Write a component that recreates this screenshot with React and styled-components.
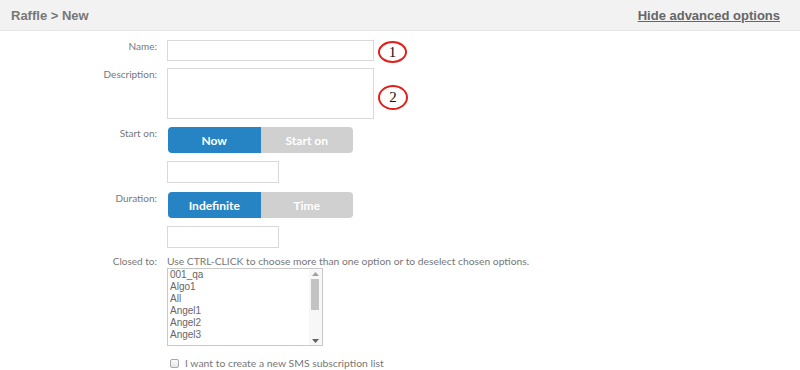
import React from "react";
import styled, { createGlobalStyle } from "styled-components";

const Global = createGlobalStyle`
  html, body { margin: 0; padding: 0; background: #fff; }
  body { font-family: Lato, "Open Sans", sans-serif; }
`;

const Page = styled.div`
  width: 800px;
  height: 370px;
  overflow: hidden;
  background: #fff;
`;

const Header = styled.div`
  height: 30px;
  background: #f2f2f2;
  border-bottom: 1px solid #e6e6e6;
  display: flex;
  align-items: center;
  justify-content: space-between;
  padding: 0 20px 0 11px;
  font-family: "Liberation Sans", Arial, sans-serif;
  font-weight: bold;
  font-size: 13px;
  color: #777;
`;

const HeaderLink = styled.a`
  color: #666;
  text-decoration: underline;
  cursor: pointer;
`;

const Form = styled.div`
  display: flex;
  flex-direction: column;
  padding-top: 9px;
`;

const Row = styled.div`
  display: flex;
  align-items: flex-start;
  gap: 10px;
  margin-bottom: ${(p) => p.$mb ?? 7}px;
`;

const Label = styled.div`
  width: 157px;
  flex: none;
  text-align: right;
  font-size: 10px;
  line-height: 13px;
  color: #777;
  padding-top: ${(p) => p.$pt ?? 0}px;
`;

const Field = styled.div`
  display: flex;
  flex-direction: column;
  align-items: flex-start;
  gap: ${(p) => p.$gap ?? 8}px;
`;

const Inline = styled.div`
  display: flex;
  align-items: flex-start;
`;

const TextInput = styled.div`
  box-sizing: border-box;
  width: ${(p) => p.$w}px;
  height: ${(p) => p.$h}px;
  border: 1px solid #d9d9d9;
  background: #fff;
`;

const Marker = styled.div`
  box-sizing: border-box;
  width: ${(p) => p.$w}px;
  height: ${(p) => p.$h}px;
  border: 2px solid #e0201a;
  border-radius: 50%;
  display: flex;
  align-items: center;
  justify-content: center;
  font-family: "Liberation Serif", "Times New Roman", serif;
  font-size: 15px;
  color: #111;
  margin-left: ${(p) => p.$ml}px;
  margin-top: ${(p) => p.$mt ?? 0}px;
  margin-bottom: ${(p) => p.$mb ?? 0}px;
`;

const Toggle = styled.div`
  display: flex;
  width: 185px;
  height: 26px;
  border-radius: 4px;
  overflow: hidden;
  margin-left: 1px;
`;

const ToggleBtn = styled.div`
  flex: 1;
  display: flex;
  align-items: center;
  justify-content: center;
  font-size: 12px;
  font-weight: 700;
  color: #fff;
  background: ${(p) => (p.$active ? "#2684c4" : "#d0d0d0")};
`;

const Hint = styled.div`
  font-size: 10.3px;
  line-height: 12px;
  color: #777;
`;

const ListBox = styled.div`
  box-sizing: border-box;
  width: 156px;
  height: 78px;
  border: 1px solid #c9c9c9;
  display: flex;
  margin-top: -7px;
  background: #fff;
`;

const Options = styled.div`
  flex: 1;
  padding: 0 0 0 2px;
  font-family: "Liberation Sans", Arial, sans-serif;
  font-size: 10px;
  line-height: 12px;
  color: #666;
  overflow: hidden;
`;

const Scrollbar = styled.div`
  width: 12px;
  display: flex;
  flex-direction: column;
  align-items: center;
  background: #f7f7f7;
  padding-right: 1px;
`;

const Arrow = styled.div`
  height: 9px;
  display: flex;
  align-items: center;
  justify-content: center;
`;

const Track = styled.div`
  flex: 1;
  width: 100%;
  display: flex;
  justify-content: center;
`;

const Thumb = styled.div`
  width: 8px;
  height: 31px;
  margin-top: 1px;
  background: #c3c3c3;
`;

const CheckRow = styled.label`
  display: flex;
  align-items: center;
  gap: 6px;
  margin-left: 170px;
  margin-top: 11px;
  font-size: 10.4px;
  line-height: 13px;
  color: #777;
`;

const Box = styled.span`
  box-sizing: border-box;
  width: 9px;
  height: 9px;
  border: 1px solid #a8a8a8;
  border-radius: 2px;
  background: linear-gradient(#fafafa, #e6e6e6);
`;

const items = ["001_qa", "Algo1", "All", "Angel1", "Angel2", "Angel3"];

export default function App() {
  return (
    <Page>
      <Global />
      <Header>
        <span>Raffle &gt; New</span>
        <HeaderLink>Hide advanced options</HeaderLink>
      </Header>
      <Form>
        <Row $mb={7}>
          <Label>Name:</Label>
          <Inline>
            <TextInput $w={207} $h={21} />
            <Marker $w={29} $h={22} $ml={4} $mt={1} $mb={-2}>1</Marker>
          </Inline>
        </Row>
        <Row $mb={8}>
          <Label>Description:</Label>
          <Inline>
            <TextInput $w={207} $h={51} />
            <Marker $w={30} $h={25} $ml={4} $mt={17}>2</Marker>
          </Inline>
        </Row>
        <Row $mb={9}>
          <Label>Start on:</Label>
          <Field>
            <Toggle>
              <ToggleBtn $active>Now</ToggleBtn>
              <ToggleBtn>Start on</ToggleBtn>
            </Toggle>
            <TextInput $w={112} $h={22} />
          </Field>
        </Row>
        <Row $mb={7}>
          <Label>Duration:</Label>
          <Field>
            <Toggle>
              <ToggleBtn $active>Indefinite</ToggleBtn>
              <ToggleBtn>Time</ToggleBtn>
            </Toggle>
            <TextInput $w={112} $h={22} />
          </Field>
        </Row>
        <Row $mb={0}>
          <Label>Closed to:</Label>
          <Field>
            <Hint>Use CTRL-CLICK to choose more than one option or to deselect chosen options.</Hint>
            <ListBox>
              <Options>
                {items.map((it) => (
                  <div key={it}>{it}</div>
                ))}
              </Options>
              <Scrollbar>
                <Arrow>
                  <svg width="7" height="4" viewBox="0 0 7 4">
                    <path d="M0 4 L3.5 0 L7 4 Z" fill="#a0a0a0" />
                  </svg>
                </Arrow>
                <Track>
                  <Thumb />
                </Track>
                <Arrow>
                  <svg width="7" height="4" viewBox="0 0 7 4">
                    <path d="M0 0 L7 0 L3.5 4 Z" fill="#606060" />
                  </svg>
                </Arrow>
              </Scrollbar>
            </ListBox>
          </Field>
        </Row>
        <CheckRow>
          <Box />
          I want to create a new SMS subscription list
        </CheckRow>
      </Form>
    </Page>
  );
}
